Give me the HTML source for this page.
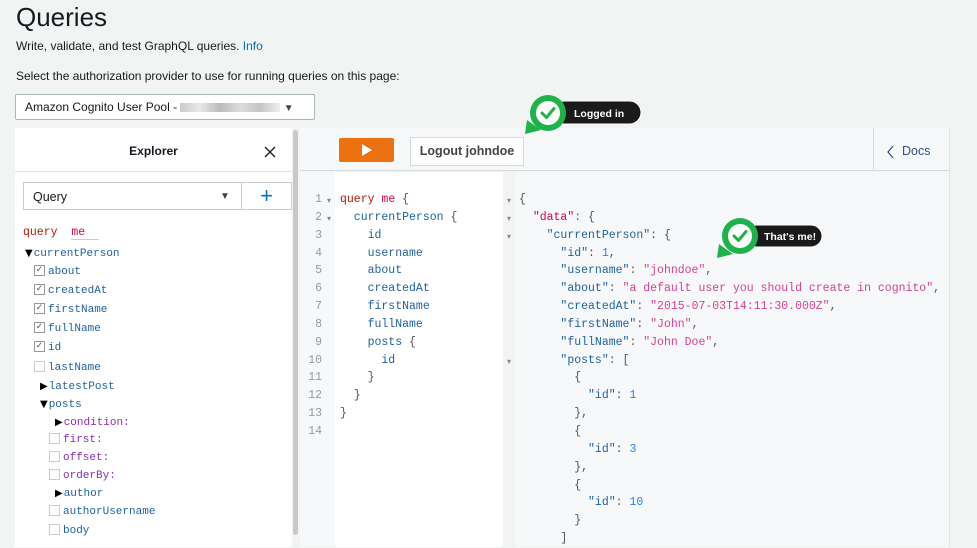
<!DOCTYPE html>
<html><head><meta charset="utf-8"><style>
*{box-sizing:border-box;margin:0;padding:0}
body{width:977px;height:547px;overflow:hidden;background:#f2f3f3;font-family:"Liberation Sans",sans-serif;color:#16191f;position:relative}
.a{position:absolute}
.m{font-family:"Liberation Mono",monospace}
.code{font-size:11.5px;line-height:17.85px;white-space:pre}
.tree div{position:absolute;font-family:"Liberation Mono",monospace;font-size:11px;line-height:14px;color:#1f61a0;white-space:pre}
.cb{display:inline-block;width:11px;height:11px;border:1px solid #999;vertical-align:middle;margin-top:-2px;margin-right:3px;background:#fff;font-size:9px;line-height:9px;text-align:center;color:#555;font-family:"DejaVu Sans",sans-serif}
.cb.e{border-color:#ccc}
.tri{color:#000;font-size:10px;font-family:"DejaVu Sans",sans-serif;margin-right:1px}
.kw{color:#b11a04}.nm{color:#d2054e}.fd{color:#1f61a0}.st{color:#d64292}.nu{color:#2882f9}.pu{color:#555}
</style></head><body>
<div class="a" style="left:16px;top:2px;font-size:26px;color:#16191f">Queries</div>
<div class="a" style="left:16px;top:39px;font-size:12px">Write, validate, and test GraphQL queries. <span style="color:#0073bb">Info</span></div>
<div class="a" style="left:16px;top:69px;font-size:12px">Select the authorization provider to use for running queries on this page:</div>
<div class="a" style="left:15px;top:94px;width:300px;height:26px;background:#fff;border:1px solid #aab7b8;border-radius:2px;font-size:12px;padding:5px 0 0 9px">Amazon Cognito User Pool - <span style="display:inline-block;width:100px;height:9px;background:linear-gradient(90deg,#ccc,#e8e8e8 20%,#bbb 40%,#ddd 60%,#c4c4c4 80%,#eee);vertical-align:-1px"></span> <span style="font-size:10px;color:#444">▼</span></div>

<div class="a" style="left:15px;top:128px;width:277px;height:419px;background:#fff"></div>
<div class="a" style="left:15px;top:144px;width:277px;text-align:center;font-size:12px;font-weight:bold">Explorer</div>
<svg class="a" style="left:264px;top:146px" width="12" height="12" viewBox="0 0 12 12"><path d="M1 1L11 11M11 1L1 11" stroke="#222" stroke-width="1.4"/></svg>
<div class="a" style="left:15px;top:171px;width:277px;height:1px;background:#e5e5e5"></div>
<div class="a" style="left:23px;top:182px;width:219px;height:28px;border:1px solid #ccc;font-size:12.5px;padding:7px 0 0 9px">Query<span class="a" style="left:196px;top:8px;font-size:10px;color:#444">▼</span></div>
<div class="a" style="left:241px;top:182px;width:51px;height:28px;border:1px solid #ccc;text-align:center;color:#0073bb;font-size:22px;line-height:26px">+</div>
<div class="a" style="left:293px;top:130px;width:5px;height:405px;background:#c9c9c9;border-radius:3px"></div>
<div class="tree">
<div style="left:23px;top:226px;font-size:11.5px"><span class="kw">query</span>  <span class="nm" style="border-bottom:1px solid #ccc">me  </span></div>
<div style="left:25px;top:247px"><span class="tri">▼</span>currentPerson</div>
<div style="left:34px;top:265px"><span class="cb">✓</span>about</div>
<div style="left:34px;top:284px"><span class="cb">✓</span>createdAt</div>
<div style="left:34px;top:303px"><span class="cb">✓</span>firstName</div>
<div style="left:34px;top:322px"><span class="cb">✓</span>fullName</div>
<div style="left:34px;top:341px"><span class="cb">✓</span>id</div>
<div style="left:34px;top:361px"><span class="cb e"></span>lastName</div>
<div style="left:40px;top:380px"><span class="tri">▶</span>latestPost</div>
<div style="left:40px;top:398px"><span class="tri">▼</span>posts</div>
<div style="left:55px;top:416px;color:#8b2bb9"><span class="tri">▶</span>condition:</div>
<div style="left:49px;top:433px;color:#8b2bb9"><span class="cb e"></span>first:</div>
<div style="left:49px;top:451px;color:#8b2bb9"><span class="cb e"></span>offset:</div>
<div style="left:49px;top:469px;color:#8b2bb9"><span class="cb e"></span>orderBy:</div>
<div style="left:55px;top:487px"><span class="tri">▶</span>author</div>
<div style="left:49px;top:505px"><span class="cb e"></span>authorUsername</div>
<div style="left:49px;top:524px"><span class="cb e"></span>body</div>
</div>

<div class="a" style="left:300px;top:128px;width:650px;height:43px;background:#f7f8fa;border-bottom:1px solid #d5dbdb"></div>
<div class="a" style="left:339px;top:138px;width:55px;height:24px;background:#ec7211;border-radius:2px"></div>
<div class="a" style="left:362px;top:144px;width:0;height:0;border-left:10px solid #fff;border-top:6px solid transparent;border-bottom:6px solid transparent"></div>
<div class="a" style="left:410px;top:137px;width:114px;height:29px;background:#fff;border:1px solid #d5dbdb;font-size:12.5px;font-weight:bold;color:#444;text-align:center;line-height:27px">Logout johndoe</div>
<div class="a" style="left:873px;top:128px;width:1px;height:43px;background:#d5dbdb"></div>
<svg class="a" style="left:887px;top:145px" width="8" height="14" viewBox="0 0 8 14"><path d="M6 1L1 7L6 13" fill="none" stroke="#2b4f8f" stroke-width="1.2"/></svg>
<div class="a" style="left:902px;top:144px;font-size:12.5px;color:#2b4f8f">Docs</div>
<div class="a" style="left:300px;top:172px;width:35px;height:375px;background:#f7f8fa"></div>
<div class="a" style="left:335px;top:172px;width:168px;height:375px;background:#fff"></div>
<div class="a" style="left:503px;top:172px;width:12px;height:375px;background:#f2f3f3"></div>
<div class="a" style="left:515px;top:172px;width:435px;height:375px;background:#f7f8fa"></div>
<div class="a" style="left:949px;top:128px;width:1px;height:419px;background:#e3e3e3"></div>

<div class="a m code" style="left:305px;top:191px;color:#999;text-align:right;width:17px">1
2
3
4
5
6
7
8
9
10
11
12
13
14</div>
<div class="a m" style="left:327px;top:193px;font-size:8px;line-height:17.85px;color:#888;white-space:pre">▾
▾</div>
<div class="a m code" style="left:340px;top:191px"><span class="kw">query</span> <span class="nm">me</span> <span class="pu">{</span>
<span class="fd">  currentPerson</span> <span class="pu">{</span>
<span class="fd">    id
    username
    about
    createdAt
    firstName
    fullName
    posts</span> <span class="pu">{</span>
<span class="fd">      id</span>
<span class="pu">    }
  }
}</span></div>
<div class="a m" style="left:507px;top:193px;font-size:8px;line-height:17.85px;color:#888;white-space:pre">▾
▾
▾






▾</div>
<div class="a m code" style="left:519px;top:191px"><span class="pu">{</span>
  <span class="nm">"data"</span><span class="pu">: {</span>
    <span class="fd">"currentPerson"</span><span class="pu">: {</span>
      <span class="fd">"id"</span><span class="pu">: </span><span class="nu">1</span><span class="pu">,</span>
      <span class="fd">"username"</span><span class="pu">: </span><span class="st">"johndoe"</span><span class="pu">,</span>
      <span class="fd">"about"</span><span class="pu">: </span><span class="st">"a default user you should create in cognito"</span><span class="pu">,</span>
      <span class="fd">"createdAt"</span><span class="pu">: </span><span class="st">"2015-07-03T14:11:30.000Z"</span><span class="pu">,</span>
      <span class="fd">"firstName"</span><span class="pu">: </span><span class="st">"John"</span><span class="pu">,</span>
      <span class="fd">"fullName"</span><span class="pu">: </span><span class="st">"John Doe"</span><span class="pu">,</span>
      <span class="fd">"posts"</span><span class="pu">: [
        {</span>
          <span class="fd">"id"</span><span class="pu">: </span><span class="nu">1</span>
<span class="pu">        },
        {</span>
          <span class="fd">"id"</span><span class="pu">: </span><span class="nu">3</span>
<span class="pu">        },
        {</span>
          <span class="fd">"id"</span><span class="pu">: </span><span class="nu">10</span>
<span class="pu">        }
      ]</span></div>

<svg class="a" style="left:515px;top:92px" width="130" height="46" viewBox="0 0 130 46">
<rect x="38" y="9" width="88" height="23" rx="11.5" fill="#1a1a1a" stroke="#fff" stroke-width="1"/>
<text x="59" y="25" font-family="Liberation Sans" font-size="10.5" font-weight="bold" fill="#fff">Logged in</text>
<path d="M10 42 L12 28 L26 38 Z" fill="#1db34a"/>
<circle cx="33" cy="21" r="18" fill="#1db34a"/>
<circle cx="33" cy="21" r="12" fill="#fff"/>
<path d="M27 21 L31.5 25.5 L39 16.5" fill="none" stroke="#1db34a" stroke-width="3" stroke-linecap="round" stroke-linejoin="round"/>
</svg>
<svg class="a" style="left:710px;top:214px" width="120" height="50" viewBox="0 0 120 50">
<rect x="36" y="11" width="76" height="22" rx="11" fill="#1a1a1a" stroke="#fff" stroke-width="1"/>
<text x="54" y="26" font-family="Liberation Sans" font-size="10.5" font-weight="bold" fill="#fff">That's me!</text>
<path d="M7 44 L9 30 L23 40 Z" fill="#1db34a"/>
<circle cx="30" cy="22" r="18" fill="#1db34a"/>
<circle cx="30" cy="22" r="12" fill="#fff"/>
<path d="M24 22 L28.5 26.5 L36 17.5" fill="none" stroke="#1db34a" stroke-width="3" stroke-linecap="round" stroke-linejoin="round"/>
</svg>
</body></html>
